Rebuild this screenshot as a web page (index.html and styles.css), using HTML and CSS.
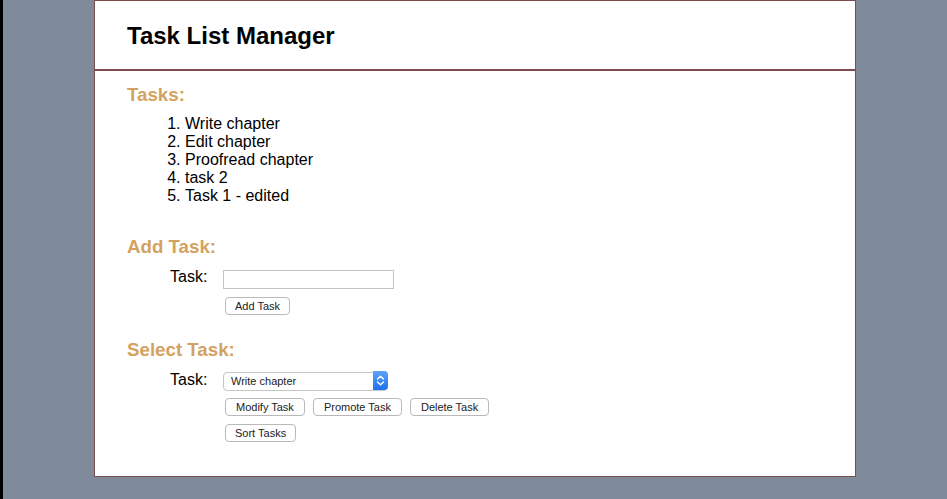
FILE: index.html
```html
<!DOCTYPE html>
<html lang="en">
<head>
<meta charset="utf-8">
<title>Task List Manager</title>
<link rel="stylesheet" href="styles.css">
</head>
<body>
<div class="page">
  <header class="header">
    <h1 class="title">Task List Manager</h1>
  </header>
  <main class="content">
    <h3 class="section-title tasks-title">Tasks:</h3>
    <ol class="task-list">
      <li>Write chapter</li>
      <li>Edit chapter</li>
      <li>Proofread chapter</li>
      <li>task 2</li>
      <li>Task 1 - edited</li>
    </ol>

    <h3 class="section-title add-title">Add Task:</h3>
    <div class="form-row">
      <label class="label" for="newTask">Task:</label>
      <div class="controls">
        <input class="text-input" id="newTask" type="text">
        <div class="btn-row"><button class="btn" type="button">Add Task</button></div>
      </div>
    </div>

    <h3 class="section-title select-title">Select Task:</h3>
    <div class="form-row">
      <label class="label" for="taskSelect">Task:</label>
      <div class="controls">
        <div class="select-wrap">
          <select class="select" id="taskSelect">
            <option>Write chapter</option>
            <option>Edit chapter</option>
            <option>Proofread chapter</option>
            <option>task 2</option>
            <option>Task 1 - edited</option>
          </select>
          <span class="select-arrow">
            <svg width="9" height="11" viewBox="0 0 9 11"><path d="M1.5 4 L4.5 1.2 L7.5 4 M1.5 7 L4.5 9.8 L7.5 7" fill="none" stroke="#fff" stroke-width="1.4" stroke-linecap="round" stroke-linejoin="round"/></svg>
          </span>
        </div>
        <div class="btn-row">
          <button class="btn btn-wide" type="button">Modify Task</button>
          <button class="btn btn-wide" type="button">Promote Task</button>
          <button class="btn btn-wide" type="button">Delete Task</button>
        </div>
        <div class="btn-row">
          <button class="btn" type="button">Sort Tasks</button>
        </div>
      </div>
    </div>
  </main>
</div>
</body>
</html>
```
FILE: styles.css
```css
html, body {
  margin: 0;
  padding: 0;
}
body {
  background: #7f8b9b;
  border-left: 3px solid #000;
  min-height: 499px;
  box-sizing: border-box;
  font-family: "Liberation Sans", Arial, sans-serif;
  color: #000;
}
.page {
  margin-left: 91px;
  width: 762px;
  box-sizing: border-box;
  background: #fff;
  border: 1px solid #7b4b4d;
  height: 477px;
}
.header {
  height: 70px;
  box-sizing: border-box;
  padding: 21px 0 0 32px;
  border-bottom: 2px solid #7b4b4d;
}
.title {
  margin: 0;
  font-size: 24px;
  font-weight: bold;
  line-height: 28px;
}
.content {
  padding-left: 32px;
}
.section-title {
  margin: 0;
  font-size: 18.72px;
  line-height: 21px;
  font-weight: bold;
  color: #d3a25e;
}
.tasks-title { padding-top: 13px; }
.add-title { margin-top: 31px; }
.select-title { margin-top: 24px; }
.task-list {
  margin: 10px 0 0 0;
  padding-left: 58px;
  font-size: 16px;
  line-height: 18px;
}
.form-row {
  display: flex;
  margin-top: 9px;
  padding-left: 43px;
}
.label {
  width: 53px;
  font-size: 16px;
  line-height: 18px;
  padding-top: 2px;
}
.controls {
  display: flex;
  flex-direction: column;
  align-items: flex-start;
}
.text-input {
  width: 171px;
  height: 19px;
  box-sizing: border-box;
  margin: 4px 0 0 0;
  border: 1px solid #c4c4c4;
  border-radius: 0;
  padding: 0 3px;
  font-size: 11px;
  background: #fff;
}
.btn-row {
  display: flex;
  gap: 8px;
  margin-top: 8px;
  padding-left: 2px;
}
.btn {
  height: 18px;
  box-sizing: border-box;
  margin: 0;
  padding: 0 9px;
  border: 1px solid #b9b9b9;
  border-radius: 4px;
  background: #fff;
  color: #222;
  font-family: "Liberation Sans", Arial, sans-serif;
  font-size: 11px;
  line-height: 16px;
}
.btn-wide {
  padding: 0 10px;
}
.select-wrap {
  position: relative;
  width: 165px;
  height: 19px;
  margin-top: 2px;
}
.select {
  -webkit-appearance: none;
  appearance: none;
  width: 165px;
  height: 19px;
  box-sizing: border-box;
  margin: 0;
  padding: 0 0 0 7px;
  border: 1px solid #c6c6c6;
  border-radius: 4px;
  background: #fff;
  color: #222;
  font-family: "Liberation Sans", Arial, sans-serif;
  font-size: 11px;
  line-height: 17px;
}
.select-arrow {
  position: absolute;
  right: 0;
  top: 0;
  width: 15px;
  height: 19px;
  border-radius: 0 4px 4px 0;
  background: linear-gradient(#5ba4fb, #1f70ef);
  display: flex;
  align-items: center;
  justify-content: center;
}
```
